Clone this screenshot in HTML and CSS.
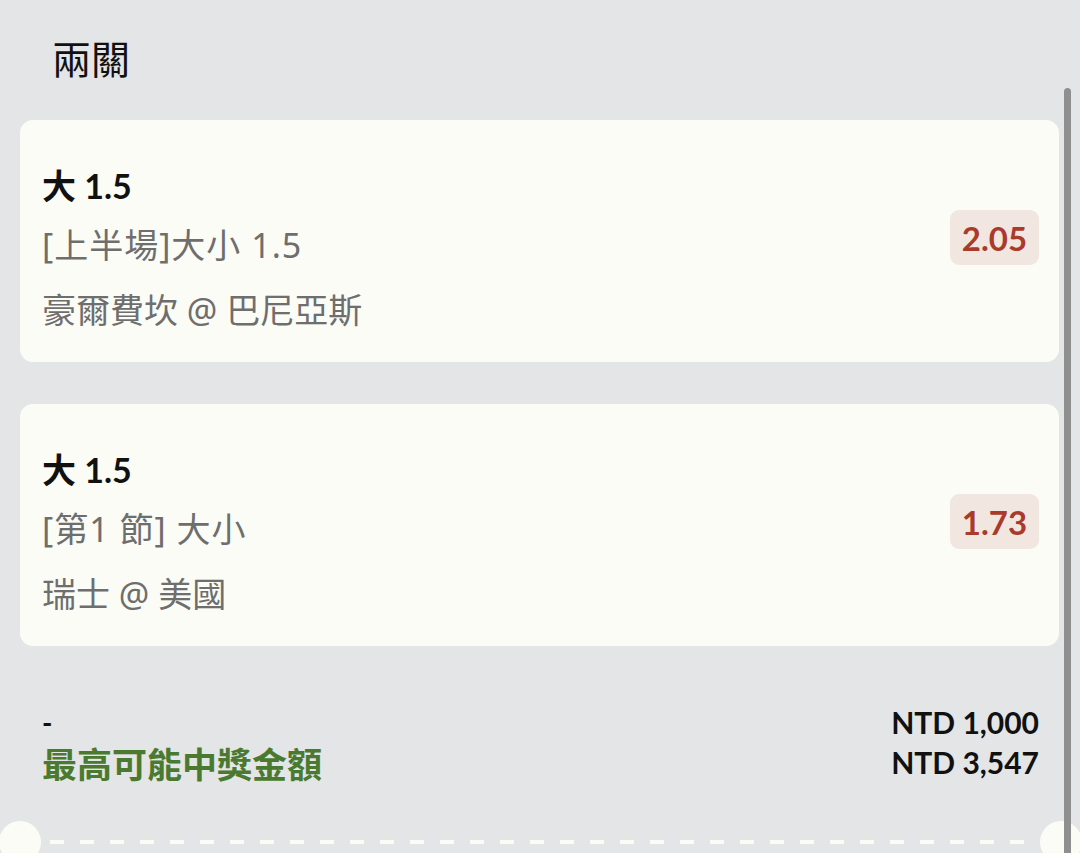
FILE: index.html
```html
<!DOCTYPE html>
<html lang="zh-Hant">
<head>
<meta charset="utf-8">
<title>兩關</title>
<link rel="stylesheet" href="styles.css">
</head>
<body>
<div class="page">
  <h1 class="title">兩關</h1>
  <div class="cards">
    <div class="card">
      <div class="info">
        <div class="pick">大 1.5</div>
        <div class="market">[上半場]大小 1.5</div>
        <div class="match">豪爾費坎 @ 巴尼亞斯</div>
      </div>
      <div class="odds">2.05</div>
    </div>
    <div class="card">
      <div class="info">
        <div class="pick">大 1.5</div>
        <div class="market">[第1 節] 大小</div>
        <div class="match">瑞士 @ 美國</div>
      </div>
      <div class="odds">1.73</div>
    </div>
  </div>
  <div class="summary">
    <div class="labels">
      <div class="stake-label">-</div>
      <div class="win-label">最高可能中獎金額</div>
    </div>
    <div class="amounts">
      <div class="amount">NTD 1,000</div>
      <div class="amount">NTD 3,547</div>
    </div>
  </div>
  <div class="tear">
    <span class="notch notch-left"></span>
    <span class="notch notch-right"></span>
  </div>
  <div class="scrollbar"></div>
</div>
</body>
</html>
```

FILE: styles.css
```css
* { box-sizing: border-box; }
html, body {
  margin: 0;
  padding: 0;
  background: #e4e5e7;
}
body {
  font-family: Lato, "Noto Sans CJK TC", sans-serif;
  color: #111;
  width: 1080px;
  height: 853px;
  overflow: hidden;
}
.page {
  position: relative;
  height: 853px;
  padding: 0 21px 0 20px;
}
.title {
  margin: 0;
  padding: 36px 0 0 32px;
  height: 120px;
  font-family: "Noto Sans CJK TC", sans-serif;
  font-size: 39px;
  line-height: 42px;
  font-weight: 400;
  color: #111;
}
.cards {
  display: flex;
  flex-direction: column;
  gap: 42px;
}
.card {
  background: #fcfcf6;
  border-radius: 13px;
  height: 242px;
  padding: 42px 20px 22px 22px;
  display: flex;
  align-items: flex-start;
  justify-content: space-between;
}
.info {
  display: flex;
  flex-direction: column;
}
.pick {
  font-size: 34px;
  font-weight: 700;
  line-height: 48px;
  color: #111;
}
.market,
.match {
  font-family: "Noto Sans", "Noto Sans CJK TC", sans-serif;
  font-size: 34px;
  color: #6e6e6e;
}
.market { line-height: 70px; letter-spacing: 1px; }
.match { line-height: 60px; }
.odds {
  margin-top: 48px;
  background: #f2e6e0;
  color: #a93a2c;
  border-radius: 9px;
  height: 55px;
  padding: 0 10px;
  min-width: 89px;
  display: flex;
  align-items: center;
  justify-content: center;
  font-size: 33px;
  font-weight: 700;
}
.summary {
  margin-top: 56px;
  display: flex;
  justify-content: space-between;
  padding: 0 20px 0 22px;
}
.stake-label {
  font-size: 28px;
  line-height: 40px;
  font-weight: 700;
}
.win-label {
  font-family: "Noto Sans CJK TC", sans-serif;
  font-size: 35px;
  line-height: 42px;
  font-weight: 700;
  color: #4a7a2f;
}
.amounts {
  text-align: right;
}
.amount {
  font-size: 30px;
  line-height: 40px;
  font-weight: 700;
  color: #111;
}
.tear {
  position: absolute;
  left: 0;
  right: 0;
  top: 840px;
  height: 4px;
  margin: 0 40px 0 50px;
  background: repeating-linear-gradient(to right, #fcfcf6 0 14px, transparent 14px 30px);
}
.notch {
  position: absolute;
  width: 42px;
  height: 42px;
  border-radius: 50%;
  background: #fcfcf6;
  top: -19px;
}
.notch-left { left: -51px; }
.notch-right { right: -42px; }
.scrollbar {
  position: absolute;
  left: 1064px;
  top: 88px;
  width: 7px;
  height: 800px;
  border-radius: 4px;
  background: #8f8f8f;
}
```
